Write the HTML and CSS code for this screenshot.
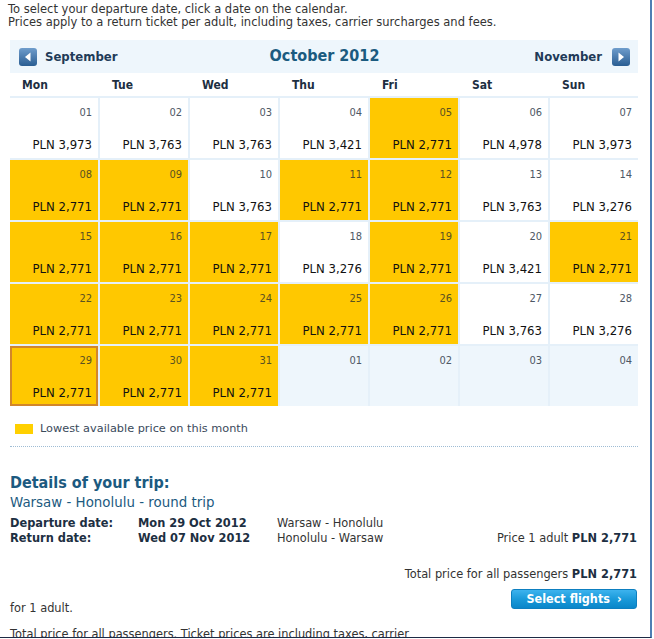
FILE: index.html
```html
<!DOCTYPE html>
<html lang="en">
<head>
<meta charset="utf-8">
<title>Calendar</title>
<link rel="stylesheet" href="styles.css">
</head>
<body>
<div class="frame">
  <p class="intro">To select your departure date, click a date on the calendar.<br>Prices apply to a return ticket per adult, including taxes, carrier surcharges and fees.</p>

  <div class="calendar">
    <div class="cal-head">
      <a class="nav prev">
        <svg class="nav-icon" width="18" height="18" viewBox="0 0 18 18"><defs><linearGradient id="g1" x1="0" y1="0" x2="0" y2="1"><stop offset="0" stop-color="#6f9dcc"/><stop offset="1" stop-color="#2a5d92"/></linearGradient></defs><rect width="18" height="18" rx="3" fill="url(#g1)"/><path d="M11.5 4.5 L11.5 13.5 L6 9 Z" fill="#fff"/></svg>
        <span>September</span>
      </a>
      <h2 class="month">October 2012</h2>
      <a class="nav next">
        <span>November</span>
        <svg class="nav-icon" width="18" height="18" viewBox="0 0 18 18"><defs><linearGradient id="g2" x1="0" y1="0" x2="0" y2="1"><stop offset="0" stop-color="#6f9dcc"/><stop offset="1" stop-color="#2a5d92"/></linearGradient></defs><rect width="18" height="18" rx="3" fill="url(#g2)"/><path d="M6.5 4.5 L6.5 13.5 L12 9 Z" fill="#fff"/></svg>
      </a>
    </div>
    <div class="weekdays">
      <div>Mon</div><div>Tue</div><div>Wed</div><div>Thu</div><div>Fri</div><div>Sat</div><div>Sun</div>
    </div>
    <div class="days">
      <div class="day"><span class="num">01</span><span class="price">PLN 3,973</span></div>
      <div class="day"><span class="num">02</span><span class="price">PLN 3,763</span></div>
      <div class="day"><span class="num">03</span><span class="price">PLN 3,763</span></div>
      <div class="day"><span class="num">04</span><span class="price">PLN 3,421</span></div>
      <div class="day low"><span class="num">05</span><span class="price">PLN 2,771</span></div>
      <div class="day"><span class="num">06</span><span class="price">PLN 4,978</span></div>
      <div class="day"><span class="num">07</span><span class="price">PLN 3,973</span></div>

      <div class="day low"><span class="num">08</span><span class="price">PLN 2,771</span></div>
      <div class="day low"><span class="num">09</span><span class="price">PLN 2,771</span></div>
      <div class="day"><span class="num">10</span><span class="price">PLN 3,763</span></div>
      <div class="day low"><span class="num">11</span><span class="price">PLN 2,771</span></div>
      <div class="day low"><span class="num">12</span><span class="price">PLN 2,771</span></div>
      <div class="day"><span class="num">13</span><span class="price">PLN 3,763</span></div>
      <div class="day"><span class="num">14</span><span class="price">PLN 3,276</span></div>

      <div class="day low"><span class="num">15</span><span class="price">PLN 2,771</span></div>
      <div class="day low"><span class="num">16</span><span class="price">PLN 2,771</span></div>
      <div class="day low"><span class="num">17</span><span class="price">PLN 2,771</span></div>
      <div class="day"><span class="num">18</span><span class="price">PLN 3,276</span></div>
      <div class="day low"><span class="num">19</span><span class="price">PLN 2,771</span></div>
      <div class="day"><span class="num">20</span><span class="price">PLN 3,421</span></div>
      <div class="day low"><span class="num">21</span><span class="price">PLN 2,771</span></div>

      <div class="day low"><span class="num">22</span><span class="price">PLN 2,771</span></div>
      <div class="day low"><span class="num">23</span><span class="price">PLN 2,771</span></div>
      <div class="day low"><span class="num">24</span><span class="price">PLN 2,771</span></div>
      <div class="day low"><span class="num">25</span><span class="price">PLN 2,771</span></div>
      <div class="day low"><span class="num">26</span><span class="price">PLN 2,771</span></div>
      <div class="day"><span class="num">27</span><span class="price">PLN 3,763</span></div>
      <div class="day"><span class="num">28</span><span class="price">PLN 3,276</span></div>

      <div class="day low selected"><span class="num">29</span><span class="price">PLN 2,771</span></div>
      <div class="day low"><span class="num">30</span><span class="price">PLN 2,771</span></div>
      <div class="day low"><span class="num">31</span><span class="price">PLN 2,771</span></div>
      <div class="day other"><span class="num">01</span></div>
      <div class="day other"><span class="num">02</span></div>
      <div class="day other"><span class="num">03</span></div>
      <div class="day other"><span class="num">04</span></div>
    </div>
  </div>

  <div class="legend"><span class="swatch"></span><span>Lowest available price on this month</span></div>
  <div class="divider"></div>

  <section class="details">
    <h3 class="details-title">Details of your trip:</h3>
    <p class="route">Warsaw - Honolulu - round trip</p>
    <div class="leg">
      <span class="leg-label">Departure date:</span>
      <span class="leg-date">Mon 29 Oct 2012</span>
      <span class="leg-route">Warsaw - Honolulu</span>
    </div>
    <div class="leg">
      <span class="leg-label">Return date:</span>
      <span class="leg-date">Wed 07 Nov 2012</span>
      <span class="leg-route">Honolulu - Warsaw</span>
      <span class="leg-price">Price 1 adult <b>PLN 2,771</b></span>
    </div>
    <p class="total">Total price for all passengers <b>PLN 2,771</b></p>
    <div class="action-row">
      <span class="note">for 1 adult.</span>
      <button class="select-btn">Select flights <span class="chev">›</span></button>
    </div>
    <p class="footnote">Total price for all passengers. Ticket prices are including taxes, carrier surcharges and fees.</p>
  </section>
</div>
</body>
</html>
```

FILE: styles.css
```css
* { box-sizing: border-box; }
html, body { margin: 0; padding: 0; background: #fff; }
body {
  font-family: "DejaVu Sans", Verdana, sans-serif;
  font-size: 11.4px;
  color: #333;
}
.frame {
  width: 652px;
  height: 638px;
  border-right: 2px solid #4f7fb4;
  border-bottom: 1px solid #1d2a44;
  overflow: hidden;
}
.intro {
  margin: 0;
  padding: 3px 0 0 8px;
  font-size: 11.5px;
  line-height: 13px;
  color: #333;
}
.calendar {
  margin: 11px 0 0 10px;
  width: 628px;
}
.cal-head {
  height: 33px;
  background: #eef6fc;
  display: flex;
  align-items: center;
  justify-content: space-between;
  padding: 0 8px 0 9px;
  font-stretch: condensed;
}
.nav {
  display: flex;
  align-items: center;
  gap: 8px;
  font-weight: bold;
  font-size: 13px;
  color: #1f3b58;
  width: 120px;
}
.nav.next { justify-content: flex-end; gap: 10px; }
.nav-icon { display: block; }
.month {
  margin: 0;
  font-size: 16px;
  font-weight: bold;
  color: #1b5b80;
  padding-bottom: 3px;
}
.weekdays {
  display: grid;
  grid-template-columns: repeat(7, 1fr);
  column-gap: 2px;
  height: 23px;
  padding-top: 1px;
  align-items: center;
  background: #fff;
  font-size: 12px;
  font-stretch: condensed;
  font-weight: bold;
  color: #1d2f42;
}
.weekdays div { padding-left: 12px; }
.days {
  display: grid;
  grid-template-columns: repeat(7, 1fr);
  grid-auto-rows: 60px;
  gap: 2px;
  border-top: 2px solid #e5f0f9;
  background: #e5f0f9;
  font-stretch: condensed;
}
.day {
  background: #fff;
  display: flex;
  flex-direction: column;
  align-items: flex-end;
  padding: 8px 6px 0 0;
}
.day .num {
  font-size: 11px;
  line-height: 14px;
  color: #4d5865;
}
.day .price {
  margin-top: 17px;
  font-size: 13px;
  line-height: 15px;
  color: #111;
}
.day.low { background: #ffc800; }
.day.low .num { color: #5a5220; }
.day.selected {
  box-shadow: inset 0 0 0 2px #d2862a;
}
.day.other { background: #eef6fc; }
.legend {
  display: flex;
  align-items: center;
  gap: 7px;
  margin: 17px 0 0 15px;
  color: #3a4a5b;
  font-size: 11.3px;
  line-height: 12px;
}
.swatch {
  width: 18px;
  height: 10px;
  background: #ffd000;
}
.divider {
  margin: 11px 0 0 10px;
  width: 628px;
  border-top: 1px dotted #9fbcd4;
}
.details { padding: 0 0 0 10px; width: 637px; }
.details-title {
  margin: 26px 0 0;
  font-size: 16px;
  font-stretch: condensed;
  line-height: 20px;
  color: #1c5a80;
}
.route {
  margin: 1px 0 0;
  font-size: 13.4px;
  line-height: 18px;
  color: #1c5a80;
}
.leg {
  display: flex;
  align-items: center;
  line-height: 15px;
  color: #333;
}
.leg:first-of-type { margin-top: 4px; }
.leg-label { width: 128px; font-weight: bold; color: #1d2f42; }
.leg-date { width: 139px; font-weight: bold; color: #1d2f42; }
.leg-route { color: #333; }
.leg-price { margin-left: auto; color: #333; }
.leg-price b, .total b { color: #1d2f42; }
.total {
  margin: 21px 0 0;
  text-align: right;
  line-height: 15px;
}
.action-row {
  display: flex;
  justify-content: space-between;
  align-items: flex-start;
  margin-top: 7px;
}
.note { padding-top: 12px; line-height: 14px; }
.select-btn {
  width: 126px;
  height: 20px;
  border: 1px solid #0d7fc0;
  border-radius: 3px;
  background: linear-gradient(#3db3ee, #1a9ada 50%, #0a86c9);
  color: #fff;
  font-family: inherit;
  font-stretch: condensed;
  font-size: 12.5px;
  font-weight: bold;
  padding: 0;
  line-height: 18px;
}
.chev { margin-left: 3px; }
.footnote {
  margin: 12px 0 0;
  line-height: 14px;
  width: 420px;
}
```
